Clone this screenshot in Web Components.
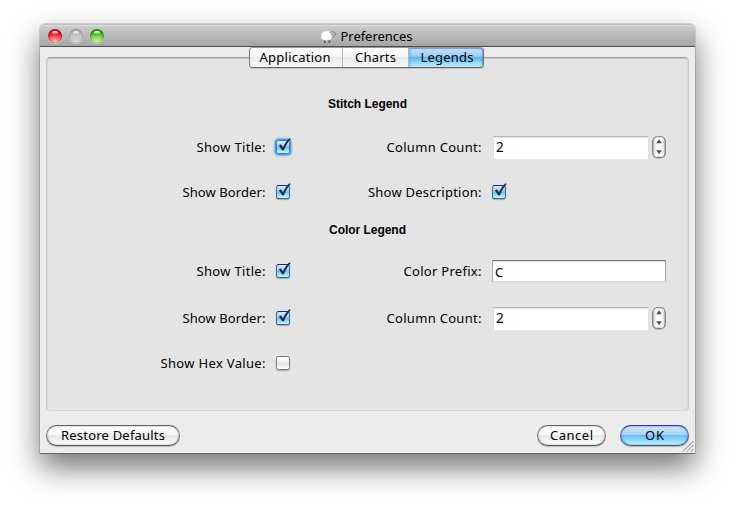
<!DOCTYPE html>
<html lang="en"><head><meta charset="utf-8"><title>Preferences</title>
<style>
body{margin:0;background:#fff;width:735px;height:508px;overflow:hidden;font:13px/20px "Noto Sans",sans-serif;color:#000}
</style></head><body>
<pref-window></pref-window>
<script>
const define=(name,html,setup)=>customElements.define(name,class extends HTMLElement{
  connectedCallback(){
    if(this.shadowRoot)return;
    const t=document.createElement('template');t.innerHTML=html;
    this.attachShadow({mode:'open'}).append(t.content.cloneNode(true));
    if(setup)setup(this);
  }
});

/* Text run tracked to an exact width given by the w attribute */
define('aqua-text',`<style>:host{display:inline-block;white-space:nowrap}span{display:inline-block}</style><span></span>`,el=>{
  const s=el.shadowRoot.querySelector('span');s.textContent=el.textContent;
  const w=+el.getAttribute('w');
  if(w){const d=(w-s.getBoundingClientRect().width)/(s.textContent.length-1);
    s.style.letterSpacing=d+'px';s.style.marginRight=-d+'px';}
});

define('traffic-light',`<style>
:host{display:block;width:14px;height:14px;border-radius:50%;box-sizing:border-box;position:relative;
 background:radial-gradient(ellipse 75% 60% at 50% 95%,var(--glow),transparent),linear-gradient(var(--a),var(--b) 60%);
 box-shadow:inset 0 1px 1.5px var(--rim),inset 0 0 1px 0 var(--rim),0 1px 0 #d0d0d0}
i{position:absolute;left:4px;top:2px;width:6px;height:3px;border-radius:50%;background:linear-gradient(#fff,#fff4)}
</style><i></i>`);

define('sheep-icon',`<style>:host{display:block;width:17px;height:14px;margin-top:2px}svg{display:block}</style>
<svg width="17" height="14" viewBox="0 0 17 14"><path d="M3.8 9v4h2V9M8.4 9v4h2V9" fill="#666"/>
<path d="M3 2.4C4 .9 6 1.2 7 1.6c1.5-.7 3.5-.4 4.2.8l.2 6c-1 1.8-2.6 1.8-3.6 1.5-1.7.8-3.4.5-4.2-.4C1.5 9.4.8 7.8 1.3 6.5.8 5 1.4 3 3 2.4z" fill="#fff" stroke="#e4e4e4" stroke-width=".5"/>
<path d="M9.5 2.3C12 1.5 14 1.8 16 3.1c.5.9-.2 1.4-.8 1.4l-1 1.7c-1 .8-2 .6-2.7-.2z" fill="#d8d8d8"/><path d="M9.3 2.3C12 1.4 14.2 1.9 15.9 3.2v1.2h-1L14 6.2l-1.6.6M11 4.1h4" fill="none" stroke="#777" stroke-width=".9"/></svg>`);

define('aqua-tab',`<style>
:host{display:flex;align-items:center;justify-content:center;box-sizing:border-box;height:19px;line-height:16px;padding-bottom:1px;border-right:1px solid #b5b5b5;border-radius:var(--r,0);background:linear-gradient(#fff,#f6f6f6 45%,#e9e9e9 50%,#fafafa)}
:host([selected]){border:0;background:linear-gradient(#c6e0f8,#9fd0f8 42%,#63b4f2 50%,#8fd3fc 75%,#c2f4ff);box-shadow:inset 0 1px #6668bd88,inset -1px 0 #4b68bf88,inset 2px 0 2px #4ba4eb66}
</style><slot></slot>`);

define('aqua-check',`<style>:host{display:block;width:14px;height:14px;position:relative}
.b{box-sizing:border-box;width:14px;height:14px;border:1px solid #777;border-radius:2.5px;background:linear-gradient(#fff,#f1f1f1 45%,#e5e5e5 52%,#fff);box-shadow:0 1px 1px #0004}
:host([checked]) .b{border-color:#25238d #3766a2 #456582;background:linear-gradient(#d5e9fa,#a5d2f6 42%,#6cb8f2 50%,#9bdcfd 75%,#c4f7ff)}
:host([focus]) .b{border-color:#3f78c4;box-shadow:0 0 1px 1px #4f9adb,0 0 2px 2px #82b5e2}
svg{position:absolute;left:0;top:-2px;display:none}:host([checked]) svg{display:block}
</style><div class="b"></div><svg width="16" height="16"><path d="M3 7.4l1.9-.8 2.1 2.9C8.6 6 11 2.6 13.2.6l1.3.3C11.8 4 9.5 7.8 7.7 12.2H6.3z" fill="#1c2c40" stroke="#1c2c40" stroke-width=".3"/></svg>`);

define('aqua-field',`<style>
:host{display:flex;align-items:center;box-sizing:border-box;width:174px;height:22px;background:#fff;border:1px solid #c9c9c9;border-top:1px solid #757575;border-left-color:#aaa;border-right-color:#aaa;border-bottom-color:#d9d9d9;padding:1px 0 0 2px;box-shadow:inset 0 1px #e2e2e2}
:host([plain]){width:156px;height:23px;border:solid #e0e0e0;border-width:1px 1px 0;border-top-color:#b9b9b9;padding:0 0 1px 2px;margin-left:1px;font-size:13.5px}
</style><slot></slot>`);

define('aqua-stepper',`<style>
:host{display:flex;gap:3px}
svg{display:block}
</style><aqua-field plain><slot></slot></aqua-field>
<svg width="14" height="23" viewBox="0 0 14 23"><defs><linearGradient id="g"><stop stop-color="#ccc"/><stop offset=".3" stop-color="#fff"/><stop offset=".7" stop-color="#fff"/><stop offset="1" stop-color="#ccc"/></linearGradient></defs>
<rect x=".8" y="1.5" width="12.4" height="20.8" rx="4.5" fill="none" stroke="#0003"/>
<rect x=".8" y=".8" width="12.4" height="20.6" rx="4.5" fill="url(#g)" stroke="#777" stroke-width="1.1"/>
<path d="M4.2 7.3L7 3.2l2.8 4.1zM4.2 14.2h5.6L7 18.2z" fill="#4d4d4d"/></svg>`);

define('aqua-button',`<style>
:host{display:flex;align-items:center;justify-content:center;box-sizing:border-box;height:21px;padding-bottom:2px;border:1px solid #666;border-color:#626262 #7d7d7d #555;border-radius:11px;
 background:linear-gradient(#fff,#f7f7f7 45%,#e6e6e6 52%,#fff);box-shadow:0 1px 1px #0003,inset 0 0 2px #0006}
:host([primary]){border-color:#3232a5 #4467b0 #45607d;background:linear-gradient(#d3e8fb,#a9d3f8 45%,#6fbdf8 50%,#92d8ff 75%,#c3fbff);box-shadow:0 1px 1px #0004,inset 0 0 2px #2370b9}
</style><slot></slot>`);

define('legend-panel',`<style>
:host{display:grid;box-sizing:border-box;width:643px;height:354px;margin:10px 0 0 6px;background:#e4e4e4;border:1px solid #c6c6c6;border-top:1px solid #a2a2a2;border-bottom-color:#d6d6d6;border-radius:4px;box-shadow:inset 0 1px #c5c5c5,inset 1px 0 #dadada,inset -1px 0 #dadada;
 grid-template-columns:218.5px 10.5px 40px 165.5px 10.5px 174px;grid-template-rows:20px 21px 24px 21px 24px 16px 20px 19px 24px 23px 24px 21px 24px;padding-top:36px;align-items:center}
h2{margin:0;font:bold 12px/20px "Liberation Sans",Arial,sans-serif;grid-column:1/7;width:79px;margin-left:281px}
h2.c{margin-left:282px}
.l{grid-column:1;justify-self:end}.m{grid-column:4;justify-self:end}
aqua-check{grid-column:3}.f{grid-column:6}
</style>
<h2 style="grid-row:1"><aqua-text w="79">Stitch Legend</aqua-text></h2>
<aqua-text class="l" w="69" style="grid-row:3">Show Title:</aqua-text><aqua-check checked focus style="grid-row:3"></aqua-check>
<aqua-text class="m" w="95" style="grid-row:3">Column Count:</aqua-text><aqua-stepper class="f" style="grid-row:3">2</aqua-stepper>
<aqua-text class="l" w="83" style="grid-row:5">Show Border:</aqua-text><aqua-check checked style="grid-row:5"></aqua-check>
<aqua-text class="m" w="113.5" style="grid-row:5">Show Description:</aqua-text><aqua-check class="f" checked style="grid-row:5"></aqua-check>
<h2 class="c" style="grid-row:7"><aqua-text w="77">Color Legend</aqua-text></h2>
<aqua-text class="l" w="69" style="grid-row:9">Show Title:</aqua-text><aqua-check checked style="grid-row:9"></aqua-check>
<aqua-text class="m" w="78" style="grid-row:9">Color Prefix:</aqua-text><aqua-field class="f" style="grid-row:9">C</aqua-field>
<aqua-text class="l" w="83" style="grid-row:11">Show Border:</aqua-text><aqua-check checked style="grid-row:11"></aqua-check>
<aqua-text class="m" w="95" style="grid-row:11">Column Count:</aqua-text><aqua-stepper class="f" style="grid-row:11">2</aqua-stepper>
<aqua-text class="l" w="105" style="grid-row:13">Show Hex Value:</aqua-text><aqua-check style="grid-row:13"></aqua-check>`);

define('pref-window',`<style>
:host{display:block;box-sizing:border-box;width:655px;height:429px;margin:24px 0 0 40px;background:#ececec;border-radius:5px 5px 0 0;position:relative;
 box-shadow:0 0 0 1px #00000020,0 1px 0 #777,0 14px 30px #00000090}
header{display:flex;align-items:center;height:23px;box-sizing:border-box;padding-left:8px;background:linear-gradient(#cecece,#a5a5a5);border-top:1px solid #c2c2c2;border-bottom:1px solid #4d4d4d;border-radius:5px 5px 0 0;box-shadow:inset 0 1px #dcdcdc}
.lights{display:flex;gap:7px;width:272px}
.red{--a:#b5101c;--b:#ff2030;--glow:#ffc4c0;--rim:#861018}
.grey{--a:#b2b2b2;--b:#c2c2c2;--glow:#dadada;--rim:#858585}
.green{--a:#35931c;--b:#62c93c;--glow:#d5ff97;--rim:#256a18}
header aqua-text{margin-left:3.5px}
.tabs{position:absolute;left:209px;top:23px;width:235px;height:21px;box-sizing:border-box;border:1px solid #777;border-top-color:#999;border-bottom-color:#666;border-radius:4px;display:grid;grid-template:19px/93px 66px 74px;box-shadow:0 1px #0002}
.tabs :first-child{--r:3px 0 0 3px}.tabs :last-child{--r:0 3px 3px 0}
.tabs aqua-text{margin-left:-2px}.tabs :nth-child(2) aqua-text{margin-left:0}.tabs :last-child aqua-text{margin-left:2px}
footer{display:flex;padding:14px 6px 0}
.grip{position:absolute;right:1px;bottom:1px}
</style>
<header><div class="lights"><traffic-light class="red"></traffic-light><traffic-light class="grey"></traffic-light><traffic-light class="green"></traffic-light></div>
<sheep-icon></sheep-icon><aqua-text w="72">Preferences</aqua-text></header>
<legend-panel></legend-panel>
<div class="tabs"><aqua-tab><aqua-text w="71">Application</aqua-text></aqua-tab><aqua-tab><aqua-text w="41">Charts</aqua-text></aqua-tab><aqua-tab selected><aqua-text w="53">Legends</aqua-text></aqua-tab></div>
<footer><aqua-button style="width:134px"><aqua-text w="104">Restore Defaults</aqua-text></aqua-button>
<aqua-button style="width:69px;margin-left:auto"><aqua-text w="43">Cancel</aqua-text></aqua-button>
<aqua-button primary style="width:69px;margin-left:14px"><aqua-text w="19">OK</aqua-text></aqua-button></footer>
<svg class="grip" width="12" height="12"><path d="M1 11.5L11.5 1M5 11.5L11.5 5M9 11.5L11.5 9" stroke="#777" stroke-width="1"/><path d="M2.3 11.5L11.5 2.3M6.3 11.5L11.5 6.3" stroke="#fff" stroke-width=".7"/></svg>`);
</script></body></html>
